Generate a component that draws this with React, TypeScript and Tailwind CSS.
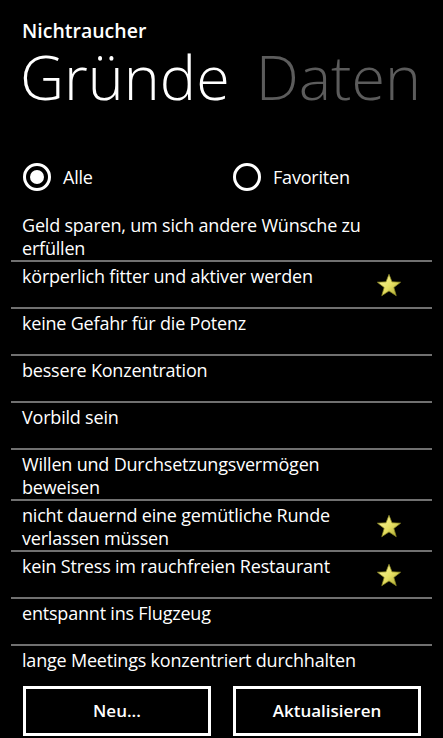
import { useState } from "react";

type Reason = { text: string; fav: boolean };

const reasons: Reason[] = [
  { text: "Geld sparen, um sich andere Wünsche zu erfüllen", fav: false },
  { text: "körperlich fitter und aktiver werden", fav: true },
  { text: "keine Gefahr für die Potenz", fav: false },
  { text: "bessere Konzentration", fav: false },
  { text: "Vorbild sein", fav: false },
  { text: "Willen und Durchsetzungsvermögen beweisen", fav: false },
  { text: "nicht dauernd eine gemütliche Runde verlassen müssen", fav: true },
  { text: "kein Stress im rauchfreien Restaurant", fav: true },
  { text: "entspannt ins Flugzeug", fav: false },
  { text: "lange Meetings konzentriert durchhalten", fav: false },
];

function Star() {
  return (
    <svg width="28" height="26" viewBox="0 0 28 26">
      <defs>
        <linearGradient id="starFill" x1="0" y1="0" x2="1" y2="1">
          <stop offset="0" stopColor="#fbf7a8" />
          <stop offset="0.55" stopColor="#e6df62" />
          <stop offset="1" stopColor="#9c9a2a" />
        </linearGradient>
      </defs>
      <path
        d="M14 1.5 L17.2 9.6 L26.5 10 L19.2 15.6 L21.8 24.5 L14 19.4 L6.2 24.5 L8.8 15.6 L1.5 10 L10.8 9.6 Z"
        fill="url(#starFill)"
        stroke="#8d8a22"
        strokeWidth="0.8"
        strokeLinejoin="round"
      />
    </svg>
  );
}

function Radio({ label, checked, onClick }: { label: string; checked: boolean; onClick: () => void }) {
  return (
    <button className="flex items-center gap-[12px] text-white" onClick={onClick}>
      <span className="flex h-[28px] w-[28px] items-center justify-center rounded-full border-[3px] border-white">
        {checked && <span className="h-[14px] w-[14px] rounded-full bg-white" />}
      </span>
      <span className="text-[18px] leading-[24px] tracking-[-0.2px]">{label}</span>
    </button>
  );
}

export default function App() {
  const [filter, setFilter] = useState<"all" | "fav">("all");
  const items = filter === "all" ? reasons : reasons.filter((r) => r.fav);

  return (
    <div
      className="flex h-[738px] w-[443px] flex-col overflow-hidden bg-black text-white"
      style={{ fontFamily: '"Open Sans", "Noto Sans", sans-serif' }}
    >
      <div className="pl-[22px] pt-[19px] text-[19.5px] font-semibold leading-[24px]">Nichtraucher</div>
      <div className="mt-[3px] flex gap-[26px] whitespace-nowrap pl-[20px] text-[61px] font-light leading-[61px]">
        <span>Gründe</span>
        <span className="text-[#5c5c5c]">Daten</span>
      </div>

      <div className="mt-[56px] flex pl-[23px]">
        <div className="w-[210px]">
          <Radio label="Alle" checked={filter === "all"} onClick={() => setFilter("all")} />
        </div>
        <Radio label="Favoriten" checked={filter === "fav"} onClick={() => setFilter("fav")} />
      </div>

      <div className="mx-[11px] mt-[20px] h-[471px] overflow-hidden">
        {items.map((r) => (
          <div key={r.text} className="flex min-h-[47px] items-center border-b-2 border-[#707070]">
            <div className="flex-1 self-start pl-[11px] pr-[4px] pt-[3px] text-[18px] leading-[23px] tracking-[-0.2px]">
              {r.text}
            </div>
            <div className="mr-[30px] flex w-[26px] shrink-0 justify-center">
              {r.fav && <Star />}
            </div>
          </div>
        ))}
      </div>

      <div className="mt-[4px] grid grid-cols-2 gap-[22px] pl-[23px] pr-[22px]">
        <button className="h-[50px] border-[3px] border-white text-[17px] font-semibold text-white">Neu...</button>
        <button className="h-[50px] border-[3px] border-white text-[17px] font-semibold text-white">Aktualisieren</button>
      </div>
    </div>
  );
}
